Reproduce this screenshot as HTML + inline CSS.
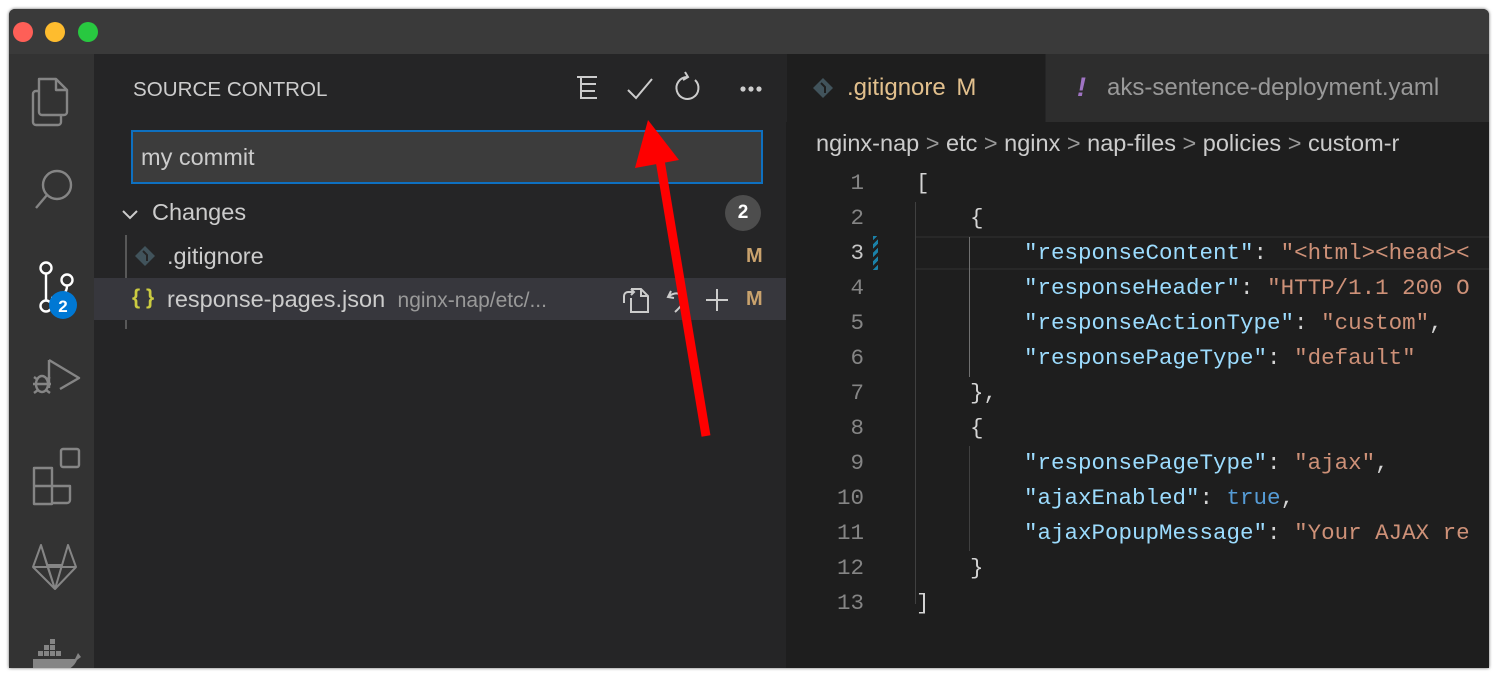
<!DOCTYPE html>
<html><head><meta charset="utf-8"><style>
*{margin:0;padding:0;box-sizing:border-box}
body{width:1500px;height:680px;background:#fff;position:relative;overflow:hidden;font-family:"Liberation Sans",sans-serif}
.win{position:absolute;left:9px;top:9px;width:1480px;height:659px;background:#252526;overflow:hidden;border-radius:6px 6px 0 0;box-shadow:0 0 3px rgba(0,0,0,.6)}
.title{position:absolute;left:0;top:0;width:100%;height:45px;background:#3a3a3a}
.dot{position:absolute;top:13px;width:20px;height:20px;border-radius:50%}
.act{position:absolute;left:0;top:45px;width:85px;height:614px;background:#333}
.side{position:absolute;left:85px;top:45px;width:692px;height:614px;background:#252526;color:#ccc}
.ed{position:absolute;left:777px;top:45px;width:703px;height:614px;background:#1e1e1e}
.abs{position:absolute;white-space:nowrap}
.code{font-family:"Liberation Mono",monospace;font-size:22.5px}
.k{color:#9cdcfe}.s{color:#ce9178}.p{color:#d4d4d4}.b{color:#569cd6}
.ln{position:absolute;left:0;width:78px;text-align:right;color:#858585;font-family:"Liberation Mono",monospace;font-size:22.5px}
</style></head><body>
<div class="win">
 <div class="title">
  <div class="dot" style="left:4px;background:#fe5f57"></div>
  <div class="dot" style="left:36px;background:#febc2e"></div>
  <div class="dot" style="left:69px;background:#28c840"></div>
 </div>
 <div class="act">
  <svg width="85" height="614" fill="none" stroke="#858585" stroke-width="2.4" stroke-linejoin="round">
   <g transform="translate(0,-8)">
   <path d="M30 33 h17 l11 11 v22 a3 3 0 0 1 -3 3 H33 a3 3 0 0 1 -3 -3z"/>
   <path d="M47 33 v11 h11"/>
   <path d="M30 45 h-3 a3 3 0 0 0 -3 3 v28 a3 3 0 0 0 3 3 h22 a3 3 0 0 0 3 -3 v-7"/>
   </g>
   <circle cx="48" cy="131" r="14"/>
   <path d="M38 141 L27 154"/>
   <g transform="translate(0,-7)">
   <g stroke="#fff">
    <circle cx="37" cy="221" r="5.5"/><circle cx="58" cy="233" r="5.5"/><circle cx="37" cy="259" r="5.5"/>
    <path d="M37 227 V253 M58 239 q0 10 -14 12 h-2"/>
   </g>
   <circle cx="54" cy="258" r="14" fill="#0078d4" stroke="none"/>
   <text x="54" y="265" fill="#fff" stroke="none" font-family="Liberation Sans" font-weight="bold" font-size="17" text-anchor="middle">2</text>
   </g>
   <g transform="translate(0,-12)">
   <path d="M40 318 V346 M40 318 L70 336 L51 347"/>
   <ellipse cx="33" cy="342" rx="6" ry="8"/>
   <path d="M25 335 l4 3 M41 335 l-4 3 M24 342 h4 M38 342 h4 M25 351 l4 -3 M41 351 l-4 -3 M27 342 h12"/>
   </g>
   <g transform="translate(0,-6)">
   <path d="M25 420 h18 v18 h-18z M25 438 h18 v18 h-18z M43 438 h18 v14 a3 3 0 0 1 -3 3 h-15 M25 438 v-16"/>
   <rect x="52" y="401" width="18" height="18" rx="2"/>
   </g>
   <g transform="translate(0,-14)">
   <path d="M24 527 L32 505 L38 525 H53 L59 505 L67 527 L46 549 Z M24 527 H67 M38 525 L46 549 L53 525 M32 505 L46 549 L59 505" stroke-width="2"/>
   </g>
   <g fill="#858585" stroke="none" transform="translate(0,8)">
    <path d="M24 597 h42 l3 -6 l3 4 l-4 3 q-4 10 -20 14 h-24 z"/>
    <rect x="29" y="589" width="5" height="5"/><rect x="35" y="589" width="5" height="5"/><rect x="41" y="589" width="5" height="5"/><rect x="47" y="589" width="5" height="5"/>
    <rect x="35" y="583" width="5" height="5"/><rect x="41" y="583" width="5" height="5"/><rect x="41" y="577" width="5" height="5"/>
   </g>
  </svg>
 </div>
 <div class="side">
  <div class="abs" style="left:39px;top:24px;font-size:20.6px;color:#ccc">SOURCE CONTROL</div>
  <svg class="abs" style="left:470px;top:12px" width="200" height="40" fill="none" stroke="#ccc" stroke-width="2">
   <path d="M13 11 h20 M17 11 v22 M17 18 h15 M17 25 h14 M17 32 h16"/>
   <path d="M64 24 l8 8 l16 -19"/>
   <path d="M131 14 a11 11 0 1 1 -8 -3 M121 6 l3 5 l-5 3" />
   <circle cx="179" cy="23" r="1.6" fill="#ccc"/><circle cx="187" cy="23" r="1.6" fill="#ccc"/><circle cx="195" cy="23" r="1.6" fill="#ccc"/>
  </svg>
  <div class="abs" style="left:37px;top:76px;width:632px;height:54px;background:#3c3c3c;border:2px solid #0e70c0"></div>
  <div class="abs" style="left:47px;top:88px;font-size:23.5px;color:#ccc;line-height:30px">my commit</div>
  <svg class="abs" style="left:26px;top:150px" width="20" height="20" fill="none" stroke="#ccc" stroke-width="2"><path d="M3 7 l7 7 l7 -7"/></svg>
  <div class="abs" style="left:58px;top:145px;font-size:23.5px;color:#ccc">Changes</div>
  <div class="abs" style="left:631px;top:141px;width:36px;height:36px;border-radius:50%;background:#4d4d4d;color:#fff;font-size:19px;font-weight:bold;text-align:center;line-height:36px">2</div>
  <div class="abs" style="left:31px;top:181px;width:2px;height:94px;background:#585858"></div>
  <div class="abs" style="left:0;top:224px;width:692px;height:42px;background:#37373d"></div>
  <svg class="abs" style="left:40px;top:191px" width="22" height="22"><path d="M11 1 L21 11 L11 21 L1 11Z" fill="#41535b"/><path d="M9 6 l4 4 v6" stroke="#252526" stroke-width="2" fill="none"/></svg>
  <div class="abs" style="left:73px;top:189px;font-size:23.5px;color:#ccc">.gitignore</div>
  <div class="abs" style="left:652px;top:191px;font-size:20px;font-weight:bold;color:#c9a26d">M</div>
  <div class="abs" style="left:38px;top:232px;font-size:21px;font-weight:bold;color:#cbcb41">{ }</div>
  <div class="abs" style="left:73px;top:232px;font-size:23.5px;color:#ccc">response-pages.json <span style="font-size:21px;color:#999">&nbsp;nginx-nap/etc/...</span></div>
  <svg class="abs" style="left:515px;top:229px" width="130" height="32" fill="none" stroke="#ccc" stroke-width="2">
   <path d="M22 6 h10 l7 7 v16 h-17 v-14 M32 6 v7 h7 M15 20 v-7 a4 4 0 0 1 4 -4 h6 M22 6 l3 3 l-3 3"/>
   <path d="M62 8 l-3 6 l6 1 M60 13 q10 -6 14 2 q2 5 -8 14"/>
   <path d="M108 6 v22 M97 17 h22"/>
  </svg>
  <div class="abs" style="left:652px;top:234px;font-size:20px;font-weight:bold;color:#c9a26d">M</div>
 </div>
 <div class="ed">
  <div class="abs" style="left:0;top:0;width:703px;height:68px;background:#252526"></div>
  <div class="abs" style="left:1px;top:0;width:258px;height:68px;background:#1e1e1e"></div>
  <div class="abs" style="left:259px;top:0;width:1px;height:68px;background:#252526"></div>
  <div class="abs" style="left:260px;top:0;width:443px;height:68px;background:#2d2d2d"></div>
  <svg class="abs" style="left:26px;top:23px" width="22" height="22"><path d="M11 1 L21 11 L11 21 L1 11Z" fill="#41535b"/><path d="M9 6 l4 4 v6" stroke="#1e1e1e" stroke-width="2" fill="none"/></svg>
  <div class="abs" style="left:61px;top:20px;font-size:24px;color:#e2c08d">.gitignore <span style="margin-left:4px">M</span></div>
  <div class="abs" style="left:291px;top:18px;font-size:27px;font-style:italic;font-weight:bold;color:#a074c4">!</div>
  <div class="abs" style="left:321px;top:20px;font-size:24px;color:#999">aks-sentence-deployment.yaml</div>
  <div class="abs" style="left:30px;top:76px;font-size:23.5px;color:#ccc">nginx-nap <span style="color:#999">&gt;</span> etc <span style="color:#999">&gt;</span> nginx <span style="color:#999">&gt;</span> nap-files <span style="color:#999">&gt;</span> policies <span style="color:#999">&gt;</span> custom-r</div>
  <div class="abs" style="left:129px;top:182px;width:574px;height:34px;border-top:2px solid #282828;border-bottom:2px solid #282828"></div>
  <div class="abs" style="left:129px;top:148px;width:1px;height:402px;background:#404040"></div>
  <div class="abs" style="left:183px;top:183px;width:1px;height:140px;background:#707070"></div>
  <div class="abs" style="left:183px;top:392px;width:1px;height:105px;background:#404040"></div>
  <div class="abs" style="left:87px;top:182px;width:5px;height:34px;background:repeating-linear-gradient(135deg,#1b81a8 0 3px,transparent 3px 6px)"></div>
  <div style="position:absolute;left:0;top:112px;line-height:35px">
   <div class="ln" style="top:0">1</div><div class="ln" style="top:35px">2</div><div class="ln" style="top:70px;color:#c6c6c6">3</div><div class="ln" style="top:105px">4</div><div class="ln" style="top:140px">5</div><div class="ln" style="top:175px">6</div><div class="ln" style="top:210px">7</div><div class="ln" style="top:245px">8</div><div class="ln" style="top:280px">9</div><div class="ln" style="top:315px">10</div><div class="ln" style="top:350px">11</div><div class="ln" style="top:385px">12</div><div class="ln" style="top:420px">13</div>
   <div class="abs code p" style="left:130px;top:0">[</div>
   <div class="abs code p" style="left:184px;top:35px">{</div>
   <div class="abs code" style="left:238px;top:70px"><span class="k">"responseContent"</span><span class="p">: </span><span class="s">"&lt;html&gt;&lt;head&gt;&lt;</span></div>
   <div class="abs code" style="left:238px;top:105px"><span class="k">"responseHeader"</span><span class="p">: </span><span class="s">"HTTP/1.1 200 O</span></div>
   <div class="abs code" style="left:238px;top:140px"><span class="k">"responseActionType"</span><span class="p">: </span><span class="s">"custom"</span><span class="p">,</span></div>
   <div class="abs code" style="left:238px;top:175px"><span class="k">"responsePageType"</span><span class="p">: </span><span class="s">"default"</span></div>
   <div class="abs code p" style="left:184px;top:210px">},</div>
   <div class="abs code p" style="left:184px;top:245px">{</div>
   <div class="abs code" style="left:238px;top:280px"><span class="k">"responsePageType"</span><span class="p">: </span><span class="s">"ajax"</span><span class="p">,</span></div>
   <div class="abs code" style="left:238px;top:315px"><span class="k">"ajaxEnabled"</span><span class="p">: </span><span class="b">true</span><span class="p">,</span></div>
   <div class="abs code" style="left:238px;top:350px"><span class="k">"ajaxPopupMessage"</span><span class="p">: </span><span class="s">"Your AJAX re</span></div>
   <div class="abs code p" style="left:184px;top:385px">}</div>
   <div class="abs code p" style="left:130px;top:420px">]</div>
  </div>
 </div>
</div>
<svg style="position:absolute;left:0;top:0" width="1500" height="680">
 <path d="M706 436 L660 160" stroke="#fe0000" stroke-width="9"/>
 <path d="M648 120 L635 168 L679 160 Z" fill="#fe0000"/>
</svg>
</body></html>
